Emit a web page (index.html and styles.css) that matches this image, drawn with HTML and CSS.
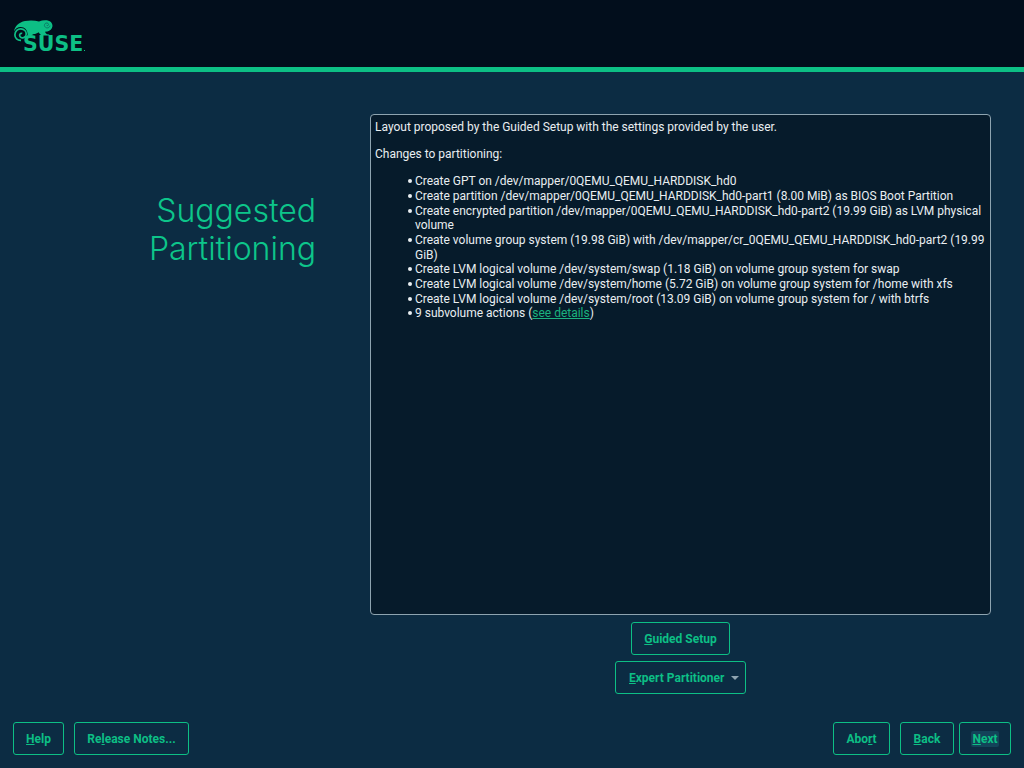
FILE: index.html
```html
<!DOCTYPE html>
<html lang="en">
<head>
    <meta charset="UTF-8">
    <meta name="viewport" content="width=device-width, initial-scale=1.0">
    <title>Suggested Partitioning</title>
    <link rel="stylesheet" href="styles.css">
</head>
<body>
  <header class="topbar">
    <div class="logo">
      <svg class="chameleon" width="40" height="22" viewBox="0 0 40 22">
        <path fill="#0dbf85" d="M0 11.5C0.4 6.5 5 2.2 11 1C16 0 21 0.4 25 1.4C28 0.2 32 -0.1 34.5 0.7C37.5 1.7 38.8 4 38.4 6.6C38 9.2 36 10.8 33.4 11.4L31 11.7C31.4 12.8 32 13.6 33 14.2L35 14.4L35.8 15.6L28 15.6C26.5 14.7 25.3 13.4 24.6 12.2C23 13.4 21.5 14 19.8 14L17 15.6L13.6 15.8C14 10.4 10.8 7 6.8 7C3.6 7 1 9 0 11.5Z"/>
        <path fill="none" stroke="#0dbf85" stroke-width="1.7" d="M7 20.4C3.4 20.6 0.8 18 0.9 14.8C1 11.4 3.8 8.6 7 8.8C10.2 9 12.4 11.4 12.2 14.2C12 16.6 10 18 8.2 17.8C6.4 17.6 5.4 16.2 5.7 14.8C6 13.6 7.2 13 8.2 13.6"/>
        <path fill="none" stroke="#0b7a66" stroke-width="1" d="M36 5.6C35.8 7.2 34.2 8.2 32.6 7.8C31 7.4 30 5.8 30.6 4.4C31.2 3 32.8 2.6 34 3.4C34.8 4 34.8 5.2 33.8 5.6C33.2 5.8 32.6 5.4 32.6 4.9"/>
      </svg>
      <span class="wordmark">SUSE<i class="dot"></i></span>
    </div>
  </header>

  <main class="content">
    <h1 class="title">Suggested<br>Partitioning</h1>
    <div class="panel">
      <div class="textbox">
        <p>Layout proposed by the Guided Setup with the settings provided by the user.</p>
        <p>Changes to partitioning:</p>
        <ul>
          <li>Create GPT on /dev/mapper/0QEMU_QEMU_HARDDISK_hd0</li>
          <li>Create partition /dev/mapper/0QEMU_QEMU_HARDDISK_hd0-part1 (8.00 MiB) as BIOS Boot Partition</li>
          <li>Create encrypted partition /dev/mapper/0QEMU_QEMU_HARDDISK_hd0-part2 (19.99 GiB) as LVM physical volume</li>
          <li>Create volume group system (19.98 GiB) with /dev/mapper/cr_0QEMU_QEMU_HARDDISK_hd0-part2 (19.99 GiB)</li>
          <li>Create LVM logical volume /dev/system/swap (1.18 GiB) on volume group system for swap</li>
          <li>Create LVM logical volume /dev/system/home (5.72 GiB) on volume group system for /home with xfs</li>
          <li>Create LVM logical volume /dev/system/root (13.09 GiB) on volume group system for / with btrfs</li>
          <li>9 subvolume actions (<a href="#">see details</a>)</li>
        </ul>
      </div>
      <button class="btn guided"><u>G</u>uided Setup</button>
      <button class="btn expert"><span><u>E</u>xpert Partitioner</span><i class="caret"></i></button>
    </div>
  </main>

  <footer class="bottombar">
    <button class="btn help"><u>H</u>elp</button>
    <button class="btn notes">Re<u>l</u>ease Notes...</button>
    <div class="spacer"></div>
    <button class="btn abort">Abo<u>r</u>t</button>
    <button class="btn back"><u>B</u>ack</button>
    <button class="btn next"><span class="focus"><u>N</u>ext</span></button>
  </footer>
</body>
</html>
```

FILE: styles.css
```css
html, body {
  margin: 0;
  padding: 0;
}
body {
  width: 1024px;
  height: 768px;
  overflow: hidden;
  display: flex;
  flex-direction: column;
  background: #0c2c43;
  font-family: "Roboto", "Liberation Sans", sans-serif;
  font-size: 12px;
  color: #e9eef1;
}

/* top bar */
.topbar {
  flex: none;
  background: #020e1c;
  border-bottom: 5px solid #0dbf85;
  padding: 20px 0 0 14px;
  height: 47px;
}
.logo {
  width: 72px;
  display: flex;
  flex-direction: column;
}
.chameleon {
  display: block;
}
.wordmark {
  font-family: "DejaVu Sans", sans-serif;
  font-weight: 700;
  font-size: 20.5px;
  line-height: 17px;
  color: #0dbf85;
  margin: -6px 0 0 9px;
  white-space: nowrap;
}
.dot {
  display: inline-block;
  width: 1px;
  height: 1px;
  background: #0dbf85;
  margin-left: 1px;
}

/* main area */
.content {
  flex: 1;
  display: flex;
  padding: 42px 33px 0 0;
}
.title {
  width: 316px;
  margin: 0 54px 0 0;
  padding-top: 78px;
  text-align: right;
  font-family: "Inter", sans-serif;
  font-weight: 300;
  font-size: 32px;
  line-height: 38px;
  color: #0dc58a;
}
.panel {
  flex: 1;
  display: flex;
  flex-direction: column;
  align-items: center;
}
.textbox {
  width: 100%;
  height: 501px;
  box-sizing: border-box;
  background: #061b2b;
  border: 1px solid #8ea4b0;
  border-radius: 4px;
  padding: 5px 4px 4px;
  line-height: 14.67px;
  letter-spacing: -0.012px;
}
.textbox p {
  margin: 0 0 12.5px;
}
.textbox ul {
  margin: 0;
  padding: 0 0 0 40px;
  list-style: none;
}
.textbox li {
  position: relative;
}
.textbox li::before {
  content: "";
  position: absolute;
  left: -7px;
  top: 5px;
  width: 4px;
  height: 4px;
  border-radius: 50%;
  background: #e9eef1;
}
.textbox a {
  color: #1bb27e;
}

/* buttons */
.btn {
  height: 33px;
  box-sizing: border-box;
  background: transparent;
  border: 1px solid #0dbf85;
  border-radius: 3px;
  color: #0dbf85;
  font-family: "Roboto", "Liberation Sans", sans-serif;
  font-size: 12px;
  font-weight: 700;
  padding: 0;
  display: flex;
  align-items: center;
  justify-content: center;
}
.guided {
  width: 99px;
  margin-top: 7px;
}
.expert {
  width: 131px;
  margin-top: 6px;
  justify-content: flex-start;
  padding-left: 13px;
}
.caret {
  width: 0;
  height: 0;
  margin-left: 7px;
  border-left: 4px solid transparent;
  border-right: 4px solid transparent;
  border-top: 4px solid #8ea4b0;
}

/* bottom bar */
.bottombar {
  flex: none;
  display: flex;
  padding: 0 13px 13px;
}
.spacer {
  flex: 1;
}
.help {
  width: 51px;
  margin-right: 10px;
}
.notes {
  width: 115px;
}
.abort {
  width: 57px;
  margin-right: 10px;
}
.back {
  width: 54px;
  margin-right: 5px;
}
.next {
  width: 52px;
}
.focus {
  background: #134359;
  border-radius: 2px;
  padding: 1px;
}
```
